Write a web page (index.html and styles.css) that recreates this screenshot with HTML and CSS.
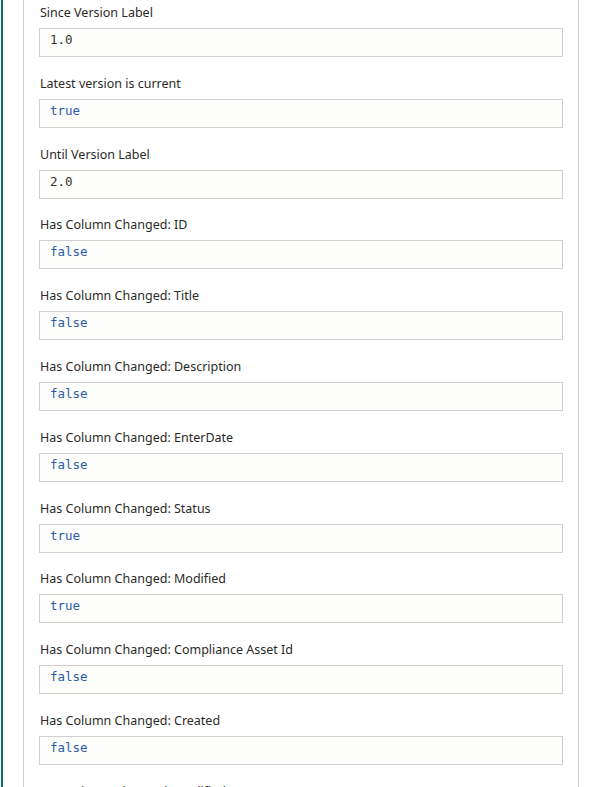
FILE: index.html
```html
<!DOCTYPE html>
<html lang="en">
<head>
<meta charset="utf-8">
<title>Version fields</title>
<link rel="stylesheet" href="styles.css">
</head>
<body>
<div class="frame">
  <div class="accent"></div>
  <div class="gutter"></div>
  <section class="panel">
    <div class="field"><div class="label">Since Version Label</div><div class="value">1.0</div></div>
    <div class="field"><div class="label">Latest version is current</div><div class="value bool">true</div></div>
    <div class="field"><div class="label">Until Version Label</div><div class="value">2.0</div></div>
    <div class="field"><div class="label">Has Column Changed: ID</div><div class="value bool">false</div></div>
    <div class="field"><div class="label">Has Column Changed: Title</div><div class="value bool">false</div></div>
    <div class="field"><div class="label">Has Column Changed: Description</div><div class="value bool">false</div></div>
    <div class="field"><div class="label">Has Column Changed: EnterDate</div><div class="value bool">false</div></div>
    <div class="field"><div class="label">Has Column Changed: Status</div><div class="value bool">true</div></div>
    <div class="field"><div class="label">Has Column Changed: Modified</div><div class="value bool">true</div></div>
    <div class="field"><div class="label">Has Column Changed: Compliance Asset Id</div><div class="value bool">false</div></div>
    <div class="field"><div class="label">Has Column Changed: Created</div><div class="value bool">false</div></div>
    <div class="field"><div class="label">Has Column Changed: Modified By</div><div class="value bool">false</div></div>
  </section>
</div>
</body>
</html>
```
FILE: styles.css
```css
html, body {
  margin: 0;
  padding: 0;
  background: #ffffff;
  height: 100%;
  overflow: hidden;
}

.frame {
  display: flex;
  height: 787px;
  padding-left: 1px;
}

.accent {
  width: 2px;
  background: #0e6b6f;
  flex: none;
}

.gutter {
  width: 20px;
  flex: none;
}

.panel {
  width: 524px;
  flex: none;
  border-left: 1px solid #cfcfcf;
  border-right: 1px solid #cfcfcf;
  padding: 2px 15px 0 15px;
  display: flex;
  flex-direction: column;
  gap: 15.8px;
  font-family: "Noto Sans", "Open Sans", sans-serif;
}

.field {
  display: flex;
  flex-direction: column;
  gap: 5px;
}

.label {
  font-size: 12.5px;
  line-height: 20px;
  padding-top: 1px;
  color: #2b2a29;
  padding-left: 1px;
  white-space: nowrap;
}

.value {
  box-sizing: border-box;
  height: 29px;
  border: 1px solid #d2d0ce;
  background: #fdfdfb;
  padding: 1px 10px 0 10px;
  font-family: "DejaVu Sans Mono", "Liberation Mono", monospace;
  font-size: 12.5px;
  line-height: 19px;
  color: #333333;
}

.value.bool {
  color: #2a5ca8;
}
```
